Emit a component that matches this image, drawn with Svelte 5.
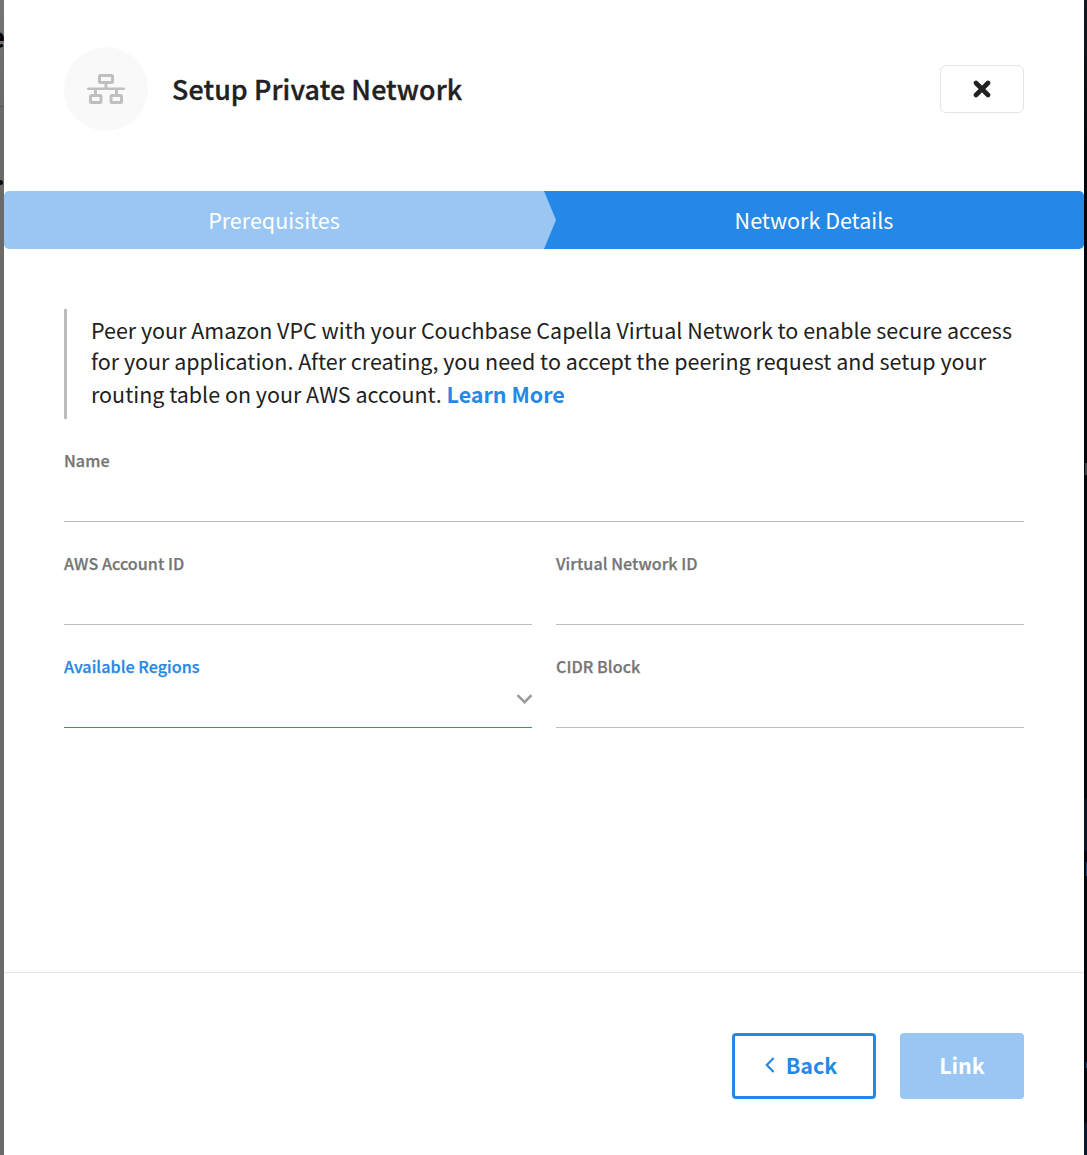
<script>
  const fields = [
    { label: 'Name', wide: true },
    { label: 'AWS Account ID' },
    { label: 'Virtual Network ID' },
    { label: 'Available Regions', select: true },
    { label: 'CIDR Block' }
  ];
</script>

<div class="page">
  <div class="backdrop left">
    <span class="letter">e</span>
    <span class="rule"></span>
    <span class="dot"></span>
  </div>

  <main class="panel">
    <header>
      <div class="badge">
        <svg width="38" height="30" viewBox="0 0 38 30" fill="none" stroke="#bfbfbf">
          <rect x="12.5" y="1.5" width="13" height="7" rx="1" stroke-width="3" />
          <rect x="3.5" y="21.5" width="10.5" height="7" rx="1" stroke-width="3" />
          <rect x="24" y="21.5" width="10.5" height="7" rx="1" stroke-width="3" />
          <path d="M19 9v6M8.500 15v5M29.500 15v5" stroke-width="3" />
          <path d="M1.300 14.800h35.400" stroke-width="2.600" stroke-linecap="round" />
        </svg>
      </div>
      <h1>Setup Private Network</h1>
      <button class="close" aria-label="Close">
        <svg width="18" height="18" viewBox="0 0 18 18" fill="none" stroke="#212121" stroke-width="4.600" stroke-linecap="round">
          <path d="M3 3l12 12M15 3L3 15" />
        </svg>
      </button>
    </header>

    <nav class="steps">
      <div class="step done">Prerequisites</div>
      <div class="step current">
        <svg class="arrow" width="12" height="58" viewBox="0 0 12 58"><path d="M0 0L12 29L0 58Z" fill="#99c6f3" /></svg>
        Network Details
      </div>
    </nav>

    <section class="body">
      <p class="note">
        <span>Peer your Amazon VPC with your Couchbase Capella Virtual Network to enable secure access</span>
        <span>for your application. After creating, you need to accept the peering request and setup your</span>
        <span>routing table on your AWS account. <a href="#learn">Learn More</a></span>
      </p>
      <div class="fields">
        {#each fields as field}
          <div class="field" class:wide={field.wide} class:active={field.select}>
            <div class="label">{field.label}</div>
            <div class="control">
              {#if field.select}
                <svg width="16" height="10" viewBox="0 0 16 10" fill="none" stroke="#999" stroke-width="2.400"><path d="M1.500 1.200L8.500 8.200L15.500 1.200" /></svg>
              {/if}
            </div>
          </div>
        {/each}
      </div>
    </section>

    <footer>
      <button class="back">
        <svg width="10" height="16" viewBox="0 0 10 16" fill="none" stroke="#2688e6" stroke-width="2.200"><path d="M8.600 1L1.800 8L8.600 15" /></svg>
        <span>Back</span>
      </button>
      <button class="link">Link</button>
    </footer>
  </main>

  <div class="backdrop right">
    <span class="sliver"></span>
    <span class="mark"></span>
    <span class="mark small"></span>
  </div>
</div>

<style>
  :global(body) { background: #fff; }
  .page {
    display: flex;
    width: 1087px;
    height: 1155px;
    overflow: hidden;
    font-family: "Noto Sans CJK SC", "Noto Sans", sans-serif;
    color: #212121;
  }
  .page * { box-sizing: border-box; }
  .backdrop { position: relative; overflow: hidden; flex: none; }
  .left { width: 4px; background: linear-gradient(#777573, #6c6a68 110px); }
  .right {
    width: 3px;
    background: linear-gradient(#111820 0, #02060c 160px, #02060c 798px, #0a1424 800px, #0a1424 850px, #02050a 851px, #02050a 1122px, #0a182c 1123px);
  }
  .letter { position: absolute; right: -1px; top: 19px; font: 700 28px/34px "Noto Sans CJK SC", sans-serif; color: #000; }
  .rule { position: absolute; left: 0; top: 106px; width: 4px; height: 1px; background: #555; }
  .dot { position: absolute; left: -2px; top: 180px; width: 5px; height: 5px; border-radius: 50%; background: #050a10; }
  .sliver { position: absolute; left: 1px; top: 463px; width: 2px; height: 12px; border: 1px solid #40444a; }
  .mark { position: absolute; left: 2px; top: 862px; width: 1px; height: 14px; background: #164a86; }
  .mark.small { top: 1062px; height: 6px; }
  .panel { width: 1080px; display: flex; flex-direction: column; background: #fff; }
  header { display: flex; align-items: center; height: 191px; padding: 0 60px 13px; }
  .badge {
    display: flex; align-items: center; justify-content: center;
    width: 84px; height: 84px; border-radius: 50%; background: #f9f9f9;
  }
  h1 {
    margin: 0 auto 0 24px; font-size: 26.800px; line-height: 36px; font-weight: 500;
    letter-spacing: 0.120px; -webkit-text-stroke: 0.350px #212121;
  }
  button { font-family: inherit; padding: 0; cursor: pointer; }
  .close {
    display: flex; align-items: center; justify-content: center;
    width: 84px; height: 48px; border: 1px solid #e4e4e4; border-radius: 6px; background: #fff;
  }
  .steps { display: flex; height: 58px; border-radius: 5px; overflow: hidden; }
  .step { position: relative; flex: 1; text-align: center; font-size: 21.500px; line-height: 58px; color: #fff; }
  .done { background: #99c6f3; }
  .current { background: #2688e6; }
  .arrow { position: absolute; left: 0; top: 0; }
  .body { padding: 60px 60px 0; height: 723px; }
  .note {
    margin: 0; height: 110px; padding: 5px 0 0 24px; border-left: 3px solid #bdbdbd;
    font-size: 21.480px; line-height: 32px; white-space: nowrap;
  }
  .note span { display: block; }
  .note span:first-child { height: 31px; }
  .note span:last-child { padding-top: 1px; }
  .note a { color: #2688e6; font-weight: 700; text-decoration: none; }
  .fields { display: grid; grid-template-columns: 1fr 1fr; column-gap: 24px; }
  .field { height: 103px; padding-top: 29px; border-bottom: 1px solid #bdbdbd; }
  .wide { grid-column: 1 / 3; }
  .label {
    font-size: 16.100px; line-height: 24px; font-weight: 500; letter-spacing: 0.050px;
    color: #757575; -webkit-text-stroke: 0.250px currentColor;
  }
  .control { display: flex; justify-content: flex-end; padding-top: 16px; }
  .active { border-color: #2688e6; }
  .active .label { color: #2688e6; }
  footer { display: flex; justify-content: flex-end; gap: 24px; height: 183px; padding: 60px 60px 0; border-top: 1px solid #e4e4e4; }
  footer button { height: 66px; border-radius: 4px; font-size: 21.500px; line-height: 60px; font-weight: 700; padding-bottom: 2px; }
  .back { display: flex; align-items: center; justify-content: center; gap: 11px; width: 144px; padding-right: 6px; border: 3px solid #2688e6; background: #fff; color: #2688e6; }
  .link { width: 124px; border: 0; background: #99c6f3; color: #fff; }
</style>
